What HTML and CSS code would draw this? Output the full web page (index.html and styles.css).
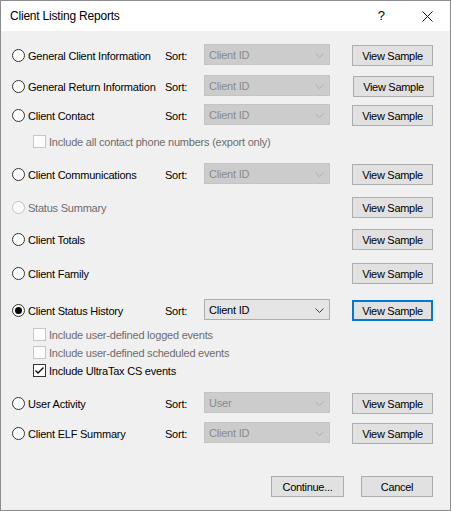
FILE: index.html
```html
<!DOCTYPE html>
<html>
<head>
<meta charset="utf-8">
<title>Client Listing Reports</title>
<link rel="stylesheet" href="styles.css">
</head>
<body>
<div class="dialog">
  <div class="titlebar">
    <span class="title">Client Listing Reports</span>
    <span class="help">?</span>
    <svg class="close" width="11" height="11" viewBox="0 0 11 11"><path d="M0.5 0.5 L10.5 10.5 M10.5 0.5 L0.5 10.5" stroke="#111" stroke-width="1" fill="none"/></svg>
  </div>
  <div class="content">
    <div class="row mt13">
      <div class="opt"><span class="radio"></span><span class="lbl">General Client Information</span></div>
      <span class="sort">Sort:</span>
      <div class="select disabled"><span>Client ID</span><svg class="chev" width="9" height="5" viewBox="0 0 9 5"><path d="M0.5 0.5 L4.5 4.5 L8.5 0.5" fill="none" stroke-width="1"/></svg></div>
      <button class="btn">View Sample</button>
    </div>
    <div class="row mt9">
      <div class="opt"><span class="radio"></span><span class="lbl">General Return Information</span></div>
      <span class="sort">Sort:</span>
      <div class="select disabled"><span>Client ID</span><svg class="chev" width="9" height="5" viewBox="0 0 9 5"><path d="M0.5 0.5 L4.5 4.5 L8.5 0.5" fill="none" stroke-width="1"/></svg></div>
      <button class="btn nudge">View Sample</button>
    </div>
    <div class="row mt7">
      <div class="opt"><span class="radio"></span><span class="lbl">Client Contact</span></div>
      <span class="sort">Sort:</span>
      <div class="select disabled"><span>Client ID</span><svg class="chev" width="9" height="5" viewBox="0 0 9 5"><path d="M0.5 0.5 L4.5 4.5 L8.5 0.5" fill="none" stroke-width="1"/></svg></div>
      <button class="btn">View Sample</button>
    </div>
    <div class="chkrow mt9 off">
      <span class="box"></span><span class="clbl">Include all contact phone numbers (export only)</span>
    </div>
    <div class="row mt15">
      <div class="opt"><span class="radio"></span><span class="lbl">Client Communications</span></div>
      <span class="sort">Sort:</span>
      <div class="select disabled"><span>Client ID</span><svg class="chev" width="9" height="5" viewBox="0 0 9 5"><path d="M0.5 0.5 L4.5 4.5 L8.5 0.5" fill="none" stroke-width="1"/></svg></div>
      <button class="btn">View Sample</button>
    </div>
    <div class="row mt11">
      <div class="opt off"><span class="radio"></span><span class="lbl">Status Summary</span></div>
      <button class="btn">View Sample</button>
    </div>
    <div class="row mt10">
      <div class="opt"><span class="radio"></span><span class="lbl">Client Totals</span></div>
      <button class="btn">View Sample</button>
    </div>
    <div class="row mt12">
      <div class="opt"><span class="radio"></span><span class="lbl">Client Family</span></div>
      <button class="btn">View Sample</button>
    </div>
    <div class="row mt15">
      <div class="opt"><span class="radio on"></span><span class="lbl">Client Status History</span></div>
      <span class="sort">Sort:</span>
      <div class="select"><span>Client ID</span><svg class="chev" width="9" height="5" viewBox="0 0 9 5"><path d="M0.5 0.5 L4.5 4.5 L8.5 0.5" fill="none" stroke-width="1"/></svg></div>
      <button class="btn focus">View Sample</button>
    </div>
    <div class="chkrow mt7 off">
      <span class="box"></span><span class="clbl">Include user-defined logged events</span>
    </div>
    <div class="chkrow mt5 off">
      <span class="box"></span><span class="clbl">Include user-defined scheduled events</span>
    </div>
    <div class="chkrow mt5">
      <span class="box"><svg width="11" height="11" viewBox="0 0 11 11"><path d="M1.5 5.5 L4 8 L9.5 2.5" fill="none" stroke="#000" stroke-width="1.3"/></svg></span><span class="clbl">Include UltraTax CS events</span>
    </div>
    <div class="row mt15">
      <div class="opt"><span class="radio"></span><span class="lbl">User Activity</span></div>
      <span class="sort">Sort:</span>
      <div class="select disabled"><span>User</span><svg class="chev" width="9" height="5" viewBox="0 0 9 5"><path d="M0.5 0.5 L4.5 4.5 L8.5 0.5" fill="none" stroke-width="1"/></svg></div>
      <button class="btn">View Sample</button>
    </div>
    <div class="row mt8">
      <div class="opt"><span class="radio"></span><span class="lbl">Client ELF Summary</span></div>
      <span class="sort">Sort:</span>
      <div class="select disabled"><span>Client ID</span><svg class="chev" width="9" height="5" viewBox="0 0 9 5"><path d="M0.5 0.5 L4.5 4.5 L8.5 0.5" fill="none" stroke-width="1"/></svg></div>
      <button class="btn">View Sample</button>
    </div>
    <div class="footer">
      <button class="btn wide">Continue...</button>
      <button class="btn cancel">Cancel</button>
    </div>
  </div>
</div>
</body>
</html>
```
FILE: styles.css
```css
html, body {
  margin: 0;
  padding: 0;
  background: #f0f0f0;
}
.dialog {
  width: 451px;
  height: 511px;
  box-sizing: border-box;
  border: 1px solid #8c8c8c;
  background: #f0f0f0;
  font-family: "Liberation Sans", Arial, sans-serif;
  font-size: 11px;
  letter-spacing: -0.22px;
  color: #000;
  overflow: hidden;
}
.titlebar {
  height: 30px;
  background: #fff;
  display: flex;
  align-items: flex-start;
}
.title {
  font-size: 12px;
  letter-spacing: -0.2px;
  line-height: 30px;
  padding-left: 9px;
}
.help {
  margin-left: auto;
  font-size: 13px;
  letter-spacing: 0;
  line-height: 30px;
  margin-right: 37px;
}
.close {
  margin-top: 10px;
  margin-right: 17px;
}
.content {
  padding-left: 11px;
}
.row {
  display: flex;
  align-items: flex-start;
  height: 22px;
  width: 421px;
}
.opt {
  display: flex;
  align-items: flex-start;
  width: 153px;
  flex: none;
}
.radio {
  width: 13px;
  height: 13px;
  box-sizing: border-box;
  border: 1px solid #333;
  border-radius: 50%;
  background: #fff;
  margin-top: 5px;
  flex: none;
  display: flex;
  align-items: center;
  justify-content: center;
}
.radio.on::after {
  content: "";
  width: 7px;
  height: 7px;
  border-radius: 50%;
  background: #000;
}
.opt.off .radio {
  border-color: #c2c2c2;
  background: #fbfbfb;
}
.opt.off .lbl {
  color: #6d6d6d;
}
.lbl {
  margin-left: 3px;
  margin-top: 6px;
  line-height: 13px;
  white-space: nowrap;
}
.sort {
  width: 39px;
  flex: none;
  margin-top: 6px;
  line-height: 13px;
}
.select {
  width: 126px;
  height: 21px;
  box-sizing: border-box;
  border: 1px solid #adadad;
  background: #e5e5e5;
  display: flex;
  align-items: flex-start;
  justify-content: space-between;
  padding: 2px 5px 0 4px;
  line-height: 17px;
  flex: none;
}
.select .chev {
  margin-top: 6px;
  stroke: #3c3c3c;
}
.select.disabled {
  background: #cccccc;
  border-color: #c4c4c4;
  color: #8a8a8a;
}
.select.disabled .chev {
  stroke: #b0b0b0;
}
.btn {
  font-family: "Liberation Sans", Arial, sans-serif;
  font-size: 11px;
  letter-spacing: -0.3px;
  color: #000;
  width: 81px;
  height: 21px;
  box-sizing: border-box;
  border: 1px solid #adadad;
  background: #e1e1e1;
  padding: 2px 0 0;
  line-height: 17px;
  margin: 1px 0 0 auto;
  flex: none;
  text-align: center;
}
.btn.nudge {
  margin-right: -1px;
}
.btn.focus {
  border: 2px solid #0078d7;
  padding-top: 1px;
}
.chkrow {
  display: flex;
  align-items: flex-start;
  height: 13px;
  padding-left: 21px;
}
.box {
  width: 13px;
  height: 13px;
  box-sizing: border-box;
  border: 1px solid #333;
  background: #fff;
  flex: none;
  display: flex;
}
.chkrow.off .box {
  border-color: #c6c6c6;
  background: #fcfcfc;
}
.chkrow.off .clbl {
  color: #6d6d6d;
}
.clbl {
  margin-left: 3px;
  margin-top: 1px;
  line-height: 13px;
  white-space: nowrap;
}
.footer {
  display: flex;
  justify-content: flex-end;
  gap: 17px;
  width: 421px;
  margin-top: 32px;
}
.footer .btn {
  margin: 0;
}
.btn.wide {
  width: 73px;
}
.btn.cancel {
  width: 72px;
}
.mt5 { margin-top: 5px; }
.mt7 { margin-top: 7px; }
.mt8 { margin-top: 8px; }
.mt9 { margin-top: 9px; }
.mt10 { margin-top: 10px; }
.mt11 { margin-top: 11px; }
.mt12 { margin-top: 12px; }
.mt13 { margin-top: 13px; }
.mt15 { margin-top: 15px; }
```
